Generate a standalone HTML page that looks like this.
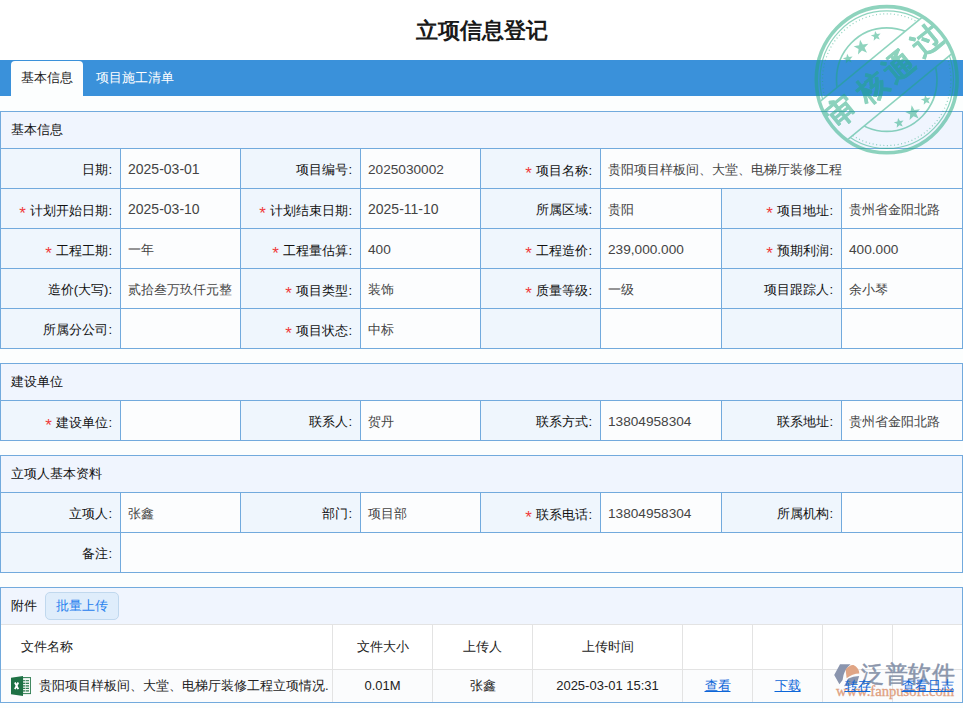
<!DOCTYPE html>
<html><head><meta charset="utf-8"><title>立项信息登记</title><style>
*{margin:0;padding:0;box-sizing:border-box}
html,body{width:964px;height:708px;overflow:hidden;background:#fcfefe;font-family:"Liberation Sans",sans-serif;font-size:13px;color:#333}
.a{position:absolute}
.sec{position:absolute;left:0;width:963px;background:#72aadd}
.c{position:absolute;white-space:nowrap;overflow:hidden}
.l{background:#eff6fd;text-align:right;padding-right:8px;color:#111}
.v{background:#fcfdfe;text-align:left;padding-left:7px;color:#444}
.h{background:#f0f5fe;padding-left:10px;color:#111}
.n{font-size:14px}
.m{font-size:13.65px}
.s{color:#f03c3c;font-size:17px;margin-right:4.5px;position:relative;top:3.5px}

a{color:#0d66d8;text-decoration:underline;position:relative;z-index:4}
</style></head><body>
<div class="a" style="left:0;top:0;width:964px;height:60px;background:#fff"></div>
<div class="a" style="left:0;width:964px;top:15px;text-align:center;font-size:22px;font-weight:bold;color:#1a1a1a;line-height:32px">立项信息登记</div>
<div class="a" style="left:963px;top:0;width:1px;height:708px;background:#fff"></div>
<div class="a" style="left:0;top:60px;width:963px;height:36px;background:#3a91da"></div>
<div class="a" style="left:11px;top:61px;width:72px;height:35px;background:#fcfefe;border-radius:4px 4px 0 0;text-align:center;line-height:34px;color:#1a1a1a">基本信息</div>
<div class="a" style="left:96px;top:61px;line-height:34px;color:#fff">项目施工清单</div>
<div class="sec" style="top:111px;height:238px">
<div class="c h" style="left:1px;top:1px;width:961px;height:36px;line-height:36px">基本信息</div>
<div class="c l" style="left:1px;top:38px;width:119px;height:39px;line-height:41px">日期:</div>
<div class="c v" style="left:121px;top:38px;width:119px;height:39px;line-height:41px"><span class="n">2025-03-01</span></div>
<div class="c l" style="left:241px;top:38px;width:119px;height:39px;line-height:41px">项目编号:</div>
<div class="c v" style="left:361px;top:38px;width:119px;height:39px;line-height:41px"><span class="m">2025030002</span></div>
<div class="c l" style="left:481px;top:38px;width:119px;height:39px;line-height:41px"><span class="s">*</span>项目名称:</div>
<div class="c v" style="left:601px;top:38px;width:361px;height:39px;line-height:41px">贵阳项目样板间、大堂、电梯厅装修工程</div>
<div class="c l" style="left:1px;top:78px;width:119px;height:39px;line-height:41px"><span class="s">*</span>计划开始日期:</div>
<div class="c v" style="left:121px;top:78px;width:119px;height:39px;line-height:41px"><span class="n">2025-03-10</span></div>
<div class="c l" style="left:241px;top:78px;width:119px;height:39px;line-height:41px"><span class="s">*</span>计划结束日期:</div>
<div class="c v" style="left:361px;top:78px;width:119px;height:39px;line-height:41px"><span class="n">2025-11-10</span></div>
<div class="c l" style="left:481px;top:78px;width:119px;height:39px;line-height:41px">所属区域:</div>
<div class="c v" style="left:601px;top:78px;width:120px;height:39px;line-height:41px">贵阳</div>
<div class="c l" style="left:722px;top:78px;width:119px;height:39px;line-height:41px"><span class="s">*</span>项目地址:</div>
<div class="c v" style="left:842px;top:78px;width:120px;height:39px;line-height:41px">贵州省金阳北路</div>
<div class="c l" style="left:1px;top:118px;width:119px;height:39px;line-height:41px"><span class="s">*</span>工程工期:</div>
<div class="c v" style="left:121px;top:118px;width:119px;height:39px;line-height:41px">一年</div>
<div class="c l" style="left:241px;top:118px;width:119px;height:39px;line-height:41px"><span class="s">*</span>工程量估算:</div>
<div class="c v" style="left:361px;top:118px;width:119px;height:39px;line-height:41px"><span class="m">400</span></div>
<div class="c l" style="left:481px;top:118px;width:119px;height:39px;line-height:41px"><span class="s">*</span>工程造价:</div>
<div class="c v" style="left:601px;top:118px;width:120px;height:39px;line-height:41px"><span class="m">239,000.000</span></div>
<div class="c l" style="left:722px;top:118px;width:119px;height:39px;line-height:41px"><span class="s">*</span>预期利润:</div>
<div class="c v" style="left:842px;top:118px;width:120px;height:39px;line-height:41px"><span class="m">400.000</span></div>
<div class="c l" style="left:1px;top:158px;width:119px;height:39px;line-height:41px">造价(大写):</div>
<div class="c v" style="left:121px;top:158px;width:119px;height:39px;line-height:41px">贰拾叁万玖仟元整</div>
<div class="c l" style="left:241px;top:158px;width:119px;height:39px;line-height:41px"><span class="s">*</span>项目类型:</div>
<div class="c v" style="left:361px;top:158px;width:119px;height:39px;line-height:41px">装饰</div>
<div class="c l" style="left:481px;top:158px;width:119px;height:39px;line-height:41px"><span class="s">*</span>质量等级:</div>
<div class="c v" style="left:601px;top:158px;width:120px;height:39px;line-height:41px">一级</div>
<div class="c l" style="left:722px;top:158px;width:119px;height:39px;line-height:41px">项目跟踪人:</div>
<div class="c v" style="left:842px;top:158px;width:120px;height:39px;line-height:41px">余小琴</div>
<div class="c l" style="left:1px;top:198px;width:119px;height:39px;line-height:41px">所属分公司:</div>
<div class="c v" style="left:121px;top:198px;width:119px;height:39px;line-height:41px"></div>
<div class="c l" style="left:241px;top:198px;width:119px;height:39px;line-height:41px"><span class="s">*</span>项目状态:</div>
<div class="c v" style="left:361px;top:198px;width:119px;height:39px;line-height:41px">中标</div>
<div class="c l" style="left:481px;top:198px;width:119px;height:39px;line-height:41px"></div>
<div class="c v" style="left:601px;top:198px;width:120px;height:39px;line-height:41px"></div>
<div class="c l" style="left:722px;top:198px;width:119px;height:39px;line-height:41px"></div>
<div class="c v" style="left:842px;top:198px;width:120px;height:39px;line-height:41px"></div>
</div>
<div class="sec" style="top:363px;height:78px">
<div class="c h" style="left:1px;top:1px;width:961px;height:36px;line-height:36px">建设单位</div>
<div class="c l" style="left:1px;top:38px;width:119px;height:39px;line-height:41px"><span class="s">*</span>建设单位:</div>
<div class="c v" style="left:121px;top:38px;width:119px;height:39px;line-height:41px"></div>
<div class="c l" style="left:241px;top:38px;width:119px;height:39px;line-height:41px">联系人:</div>
<div class="c v" style="left:361px;top:38px;width:119px;height:39px;line-height:41px">贺丹</div>
<div class="c l" style="left:481px;top:38px;width:119px;height:39px;line-height:41px">联系方式:</div>
<div class="c v" style="left:601px;top:38px;width:120px;height:39px;line-height:41px"><span class="m">13804958304</span></div>
<div class="c l" style="left:722px;top:38px;width:119px;height:39px;line-height:41px">联系地址:</div>
<div class="c v" style="left:842px;top:38px;width:120px;height:39px;line-height:41px">贵州省金阳北路</div>
</div>
<div class="sec" style="top:455px;height:118px">
<div class="c h" style="left:1px;top:1px;width:961px;height:36px;line-height:36px">立项人基本资料</div>
<div class="c l" style="left:1px;top:38px;width:119px;height:39px;line-height:41px">立项人:</div>
<div class="c v" style="left:121px;top:38px;width:119px;height:39px;line-height:41px">张鑫</div>
<div class="c l" style="left:241px;top:38px;width:119px;height:39px;line-height:41px">部门:</div>
<div class="c v" style="left:361px;top:38px;width:119px;height:39px;line-height:41px">项目部</div>
<div class="c l" style="left:481px;top:38px;width:119px;height:39px;line-height:41px"><span class="s">*</span>联系电话:</div>
<div class="c v" style="left:601px;top:38px;width:120px;height:39px;line-height:41px"><span class="m">13804958304</span></div>
<div class="c l" style="left:722px;top:38px;width:119px;height:39px;line-height:41px">所属机构:</div>
<div class="c v" style="left:842px;top:38px;width:120px;height:39px;line-height:41px"></div>
<div class="c l" style="left:1px;top:78px;width:119px;height:39px;line-height:41px">备注:</div>
<div class="c v" style="left:121px;top:78px;width:841px;height:39px;line-height:41px"></div>
</div>
<div class="sec" style="top:587px;height:116px">
<div class="c h" style="left:1px;top:1px;width:961px;height:36px;line-height:36px">附件</div>
<div class="a" style="left:45px;top:5px;width:74px;height:28px;background:#dfedfb;border:1px solid #c0d8ee;border-radius:5px;color:#1f80ee;text-align:center;line-height:25px">批量上传</div>
<div class="a" style="left:1px;top:37px;width:961px;height:78px;background:#e3e3e3"></div>
<div class="c" style="left:1px;top:38px;width:331px;height:44px;line-height:44px;background:#fff;text-align:left;padding-left:20px;color:#222">文件名称</div>
<div class="c" style="left:333px;top:38px;width:99px;height:44px;line-height:44px;background:#fff;text-align:center;color:#222">文件大小</div>
<div class="c" style="left:433px;top:38px;width:99px;height:44px;line-height:44px;background:#fff;text-align:center;color:#222">上传人</div>
<div class="c" style="left:533px;top:38px;width:149px;height:44px;line-height:44px;background:#fff;text-align:center;color:#222">上传时间</div>
<div class="c" style="left:683px;top:38px;width:69px;height:44px;line-height:44px;background:#fff;text-align:center;color:#222"></div>
<div class="c" style="left:753px;top:38px;width:69px;height:44px;line-height:44px;background:#fff;text-align:center;color:#222"></div>
<div class="c" style="left:823px;top:38px;width:69px;height:44px;line-height:44px;background:#fff;text-align:center;color:#222"></div>
<div class="c" style="left:893px;top:38px;width:69px;height:44px;line-height:44px;background:#fff;text-align:center;color:#222"></div>
<div class="c" style="left:1px;top:83px;width:331px;height:32px;line-height:32px;background:#fbfcfd;text-align:left;padding-left:20px;color:#222"><svg class="a" style="left:10px;top:6px" width="20" height="20" viewBox="0 0 20 20"><rect x="11.6" y="1.6" width="8" height="16" fill="#f4f8f5" stroke="#2f7d52" stroke-width="1"/><g fill="#217346"><rect x="12" y="4.2" width="2.4" height="1"/><rect x="15" y="4.2" width="3" height="1"/><rect x="12" y="6.7" width="2.4" height="1.2"/><rect x="15" y="6.7" width="3" height="1.2"/><rect x="12" y="9.3" width="2.4" height="1.2"/><rect x="15" y="9.3" width="3" height="1.2"/><rect x="12" y="11.8" width="2.4" height="1.1"/><rect x="15" y="11.8" width="3" height="1.1"/><rect x="12" y="14.3" width="2.4" height="1.2"/><rect x="15" y="14.3" width="3" height="1.2"/></g><polygon points="0,1.8 12,0 12,20 0,18.2" fill="#1e7145"/><path d="M3.9,6.5 L7.3,13.2 M7.3,6.5 L3.9,13.2" stroke="#fff" stroke-width="1.8"/></svg><span style="padding-left:18px">贵阳项目样板间、大堂、电梯厅装修工程立项情况.</span></div>
<div class="c" style="left:333px;top:83px;width:99px;height:32px;line-height:32px;background:#fbfcfd;text-align:center;color:#222">0.01M</div>
<div class="c" style="left:433px;top:83px;width:99px;height:32px;line-height:32px;background:#fbfcfd;text-align:center;color:#222">张鑫</div>
<div class="c" style="left:533px;top:83px;width:149px;height:32px;line-height:32px;background:#fbfcfd;text-align:center;color:#222">2025-03-01 15:31</div>
<div class="c" style="left:683px;top:83px;width:69px;height:32px;line-height:32px;background:#fbfcfd;text-align:center;color:#222"><a>查看</a></div>
<div class="c" style="left:753px;top:83px;width:69px;height:32px;line-height:32px;background:#fbfcfd;text-align:center;color:#222"><a>下载</a></div>
<div class="c" style="left:823px;top:83px;width:69px;height:32px;line-height:32px;background:#fbfcfd;text-align:center;color:#222"><a>转存</a></div>
<div class="c" style="left:893px;top:83px;width:69px;height:32px;line-height:32px;background:#fbfcfd;text-align:center;color:#222"><a>查看日志</a></div>
</div>
<svg class="a" style="left:0;top:0;z-index:6;pointer-events:none" width="964" height="708">
<defs><clipPath id="cin"><ellipse cx="886.7" cy="79.7" rx="69" ry="71.6"/></clipPath>
<mask id="bm"><rect x="0" y="0" width="964" height="708" fill="#fff"/><polygon points="787.17,128.59 956.93,-11.35 986.83,24.91 817.07,164.85" fill="#000"/></mask></defs>
<g opacity="0.5">
<g fill="none" stroke="#1fa87e">
<ellipse cx="886.7" cy="79.7" rx="70.4" ry="73.1" stroke-width="3.6"/>
<g mask="url(#bm)">
<ellipse cx="886.7" cy="79.7" rx="66.7" ry="68.75" stroke-width="1.2"/>
<ellipse cx="886.7" cy="79.7" rx="64.2" ry="65.85" stroke-width="1.2" stroke-dasharray="1 2.6"/>
<ellipse cx="886.75" cy="79.6" rx="50.25" ry="51.8" stroke-width="1.7"/>
</g>
<g clip-path="url(#cin)" stroke-width="1.6"><polyline points="787.17,128.59 956.93,-11.35"/><polyline points="817.07,164.85 986.83,24.91"/></g>
</g>
<g fill="#1fa87e"><polygon points="860.05,39.72 862.80,44.52 868.29,43.74 864.57,47.85 867.01,52.82 861.96,50.55 857.98,54.41 858.57,48.90 853.68,46.31 859.10,45.18"/><polygon points="875.10,30.88 876.96,34.02 880.59,33.56 878.18,36.31 879.74,39.61 876.38,38.17 873.72,40.67 874.06,37.03 870.85,35.28 874.42,34.47"/><polygon points="847.10,53.78 848.96,56.92 852.59,56.46 850.18,59.21 851.74,62.51 848.38,61.07 845.72,63.57 846.06,59.93 842.85,58.18 846.42,57.37"/><polygon points="911.65,105.32 914.40,110.12 919.89,109.34 916.17,113.45 918.61,118.42 913.56,116.15 909.58,120.01 910.17,114.50 905.28,111.91 910.70,110.78"/><polygon points="898.10,117.88 899.96,121.02 903.59,120.56 901.18,123.31 902.74,126.61 899.38,125.17 896.72,127.67 897.06,124.03 893.85,122.28 897.42,121.47"/><polygon points="925.10,94.88 926.96,98.02 930.59,97.56 928.18,100.31 929.74,103.61 926.38,102.17 923.72,104.67 924.06,101.03 920.85,99.28 924.42,98.47"/></g>
<g fill="#1fa87e" stroke="#1fa87e" stroke-width="0.5" stroke-linejoin="round" style="font-size:30px;font-weight:bold;font-family:'Liberation Sans',sans-serif"><text x="0" y="0" transform="translate(841.2,111.4) rotate(-39.5)" text-anchor="middle" dominant-baseline="central">审</text><text x="0" y="0" transform="translate(871.6,87.5) rotate(-39.5)" text-anchor="middle" dominant-baseline="central">核</text><text x="0" y="0" transform="translate(899,66.5) rotate(-39.5)" text-anchor="middle" dominant-baseline="central">通</text><text x="0" y="0" transform="translate(927,40.5) rotate(-39.5)" text-anchor="middle" dominant-baseline="central">过</text></g>
</g></svg>
<svg class="a" style="left:0;top:0;z-index:3;pointer-events:none" width="964" height="708">
<path d="M834.2,675 L840,664.2 L850.5,664.2 Q843.5,670 842.6,680 L839.4,684.2 Z" fill="#8a95ae"/>
<path d="M845.6,669.5 Q849.5,664.6 853.5,665 Q859,667.5 859.3,673.6 Q852.5,673.8 846.6,678.3 Z" fill="#e0a585"/>
<path d="M848.3,678.6 Q853,676.2 859.2,676 L856.8,683.8 L844,686.2 Z" fill="#8a95ae"/>
</svg>
<div class="a" style="left:861px;top:656px;z-index:3;font-size:23px;letter-spacing:0.5px;line-height:36px;color:#8a95ab;-webkit-text-stroke:0.5px #8a95ab;pointer-events:none">泛普软件</div>
<div class="a" style="left:836px;top:683px;z-index:3;font-family:'Liberation Serif',serif;font-size:14.6px;line-height:16px;color:#e0a080;-webkit-text-stroke:0.3px #e0a080;pointer-events:none">www.fanpusoft.com</div>
</body></html>
